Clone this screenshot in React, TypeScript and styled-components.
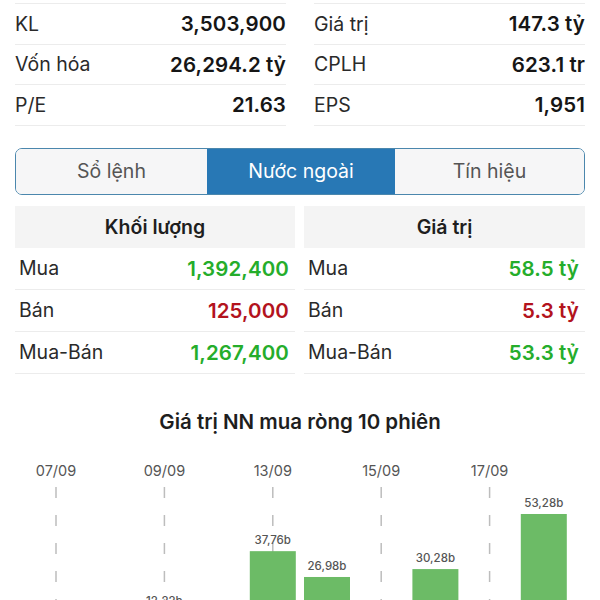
import React, { useState } from "react";
import styled, { createGlobalStyle } from "styled-components";

const GlobalStyle = createGlobalStyle`
  body {
    margin: 0;
    background: #ffffff;
    font-family: Inter, "Liberation Sans", sans-serif;
    color: #222;
  }
`;

const Page = styled.div`
  width: 600px;
  height: 600px;
  overflow: hidden;
  background: #fff;
`;

const Section = styled.div`
  padding: 0 15px;
`;

const StatsGrid = styled.div`
  display: grid;
  grid-template-columns: 1fr 1fr;
  column-gap: 28px;
  padding-top: 3px;
`;

const StatRow = styled.div`
  display: flex;
  align-items: center;
  justify-content: space-between;
  height: 39.5px;
  border-bottom: 1px solid #ececec;
  &:nth-child(-n + 2) {
    border-top: 1px solid #ececec;
  }
`;

const Label = styled.span`
  font-size: 19.5px;
  color: #2a2a2a;
`;

const Value = styled.span<{ tone?: "up" | "down" }>`
  font-size: 20.5px;
  font-weight: 600;
  letter-spacing: 0.1px;
  color: ${({ tone }) =>
    tone === "up" ? "#25ad2b" : tone === "down" ? "#b3131d" : "#161616"};
`;

const Tabs = styled.div`
  display: grid;
  grid-template-columns: 191px 188px 1fr;
  margin-top: 22px;
  height: 45px;
  border: 1.5px solid #4b87ad;
  border-radius: 7px;
  overflow: hidden;
`;

const Tab = styled.button<{ active?: boolean }>`
  border: none;
  margin: 0;
  padding: 0;
  font-family: inherit;
  font-size: 19.5px;
  background: ${({ active }) => (active ? "#2878b5" : "#f6f6f7")};
  color: ${({ active }) => (active ? "#ffffff" : "#555")};
  cursor: pointer;
`;

const Tables = styled.div`
  display: grid;
  grid-template-columns: 280px 1fr;
  column-gap: 9px;
  margin-top: 11px;
`;

const TableHead = styled.div`
  height: 42px;
  display: flex;
  align-items: center;
  justify-content: center;
  background: #f4f4f4;
  font-size: 19.5px;
  font-weight: 600;
  color: #1e1e1e;
`;

const TableRow = styled.div`
  display: flex;
  align-items: center;
  justify-content: space-between;
  height: 41px;
  padding: 0 6px 0 4px;
  border-bottom: 1px solid #ececec;
`;

const ChartTitle = styled.div`
  margin-top: 35px;
  line-height: 26px;
  text-align: center;
  font-size: 20.5px;
  font-weight: 600;
  color: #1e1e1e;
`;

const ChartSvg = styled.svg`
  display: block;
  margin-top: 15px;
`;

type Bar = { date: string; value: number };

const bars: Bar[] = [
  { date: "07/09", value: 4.1 },
  { date: "08/09", value: 6.5 },
  { date: "09/09", value: 12.22 },
  { date: "10/09", value: 7.3 },
  { date: "13/09", value: 37.76 },
  { date: "14/09", value: 26.98 },
  { date: "15/09", value: 8.4 },
  { date: "16/09", value: 30.28 },
  { date: "17/09", value: 5.6 },
  { date: "20/09", value: 53.28 },
];

const fmt = (v: number) => v.toFixed(2).replace(".", ",") + "b";

const Chart: React.FC = () => {
  const base = 191.6;
  const scale = 2.395;
  const step = 54.2;
  const x0 = 56;
  const w = 46;
  return (
    <ChartSvg width={600} height={200} viewBox="0 0 600 200">
      {bars.map((b, i) =>
        i % 2 === 0 ? (
          <g key={b.date}>
            <text
              x={x0 + i * step}
              y={26}
              textAnchor="middle"
              fontSize={14.5}
              fill="#555"
              fontFamily="Inter, 'Liberation Sans', sans-serif"
            >
              {b.date}
            </text>
            <line
              x1={x0 + i * step}
              x2={x0 + i * step}
              y1={37}
              y2={200}
              stroke="#bdbdbd"
              strokeWidth={1.5}
              strokeDasharray="11 17"
            />
          </g>
        ) : null
      )}
      {bars.map((b, i) => {
        const cx = x0 + i * step;
        const top = base - b.value * scale;
        return (
          <g key={"b" + b.date}>
            <rect x={cx - w / 2} y={top} width={w} height={b.value * scale} fill="#6cbb66" />
            <text
              x={cx}
              y={top - 7}
              textAnchor="middle"
              fontSize={11.5}
              fontWeight={500}
              fill="#555"
              fontFamily="Inter, 'Liberation Sans', sans-serif"
            >
              {fmt(b.value)}
            </text>
          </g>
        );
      })}
    </ChartSvg>
  );
};

const stats = [
  ["KL", "3,503,900"],
  ["Giá trị", "147.3 tỷ"],
  ["Vốn hóa", "26,294.2 tỷ"],
  ["CPLH", "623.1 tr"],
  ["P/E", "21.63"],
  ["EPS", "1,951"],
];

const tabs = ["Sổ lệnh", "Nước ngoài", "Tín hiệu"];

const volume: [string, string, "up" | "down"][] = [
  ["Mua", "1,392,400", "up"],
  ["Bán", "125,000", "down"],
  ["Mua-Bán", "1,267,400", "up"],
];

const amount: [string, string, "up" | "down"][] = [
  ["Mua", "58.5 tỷ", "up"],
  ["Bán", "5.3 tỷ", "down"],
  ["Mua-Bán", "53.3 tỷ", "up"],
];

export default function App() {
  const [tab, setTab] = useState(1);
  return (
    <Page>
      <GlobalStyle />
      <Section>
        <StatsGrid>
          {stats.map(([l, v]) => (
            <StatRow key={l}>
              <Label>{l}</Label>
              <Value>{v}</Value>
            </StatRow>
          ))}
        </StatsGrid>
        <Tabs>
          {tabs.map((t, i) => (
            <Tab key={t} active={i === tab} onClick={() => setTab(i)}>
              {t}
            </Tab>
          ))}
        </Tabs>
        <Tables>
          <div>
            <TableHead>Khối lượng</TableHead>
            {volume.map(([l, v, tone]) => (
              <TableRow key={l}>
                <Label>{l}</Label>
                <Value tone={tone}>{v}</Value>
              </TableRow>
            ))}
          </div>
          <div>
            <TableHead>Giá trị</TableHead>
            {amount.map(([l, v, tone]) => (
              <TableRow key={l}>
                <Label>{l}</Label>
                <Value tone={tone}>{v}</Value>
              </TableRow>
            ))}
          </div>
        </Tables>
      </Section>
      <ChartTitle>Giá trị NN mua ròng 10 phiên</ChartTitle>
      <Chart />
    </Page>
  );
}
